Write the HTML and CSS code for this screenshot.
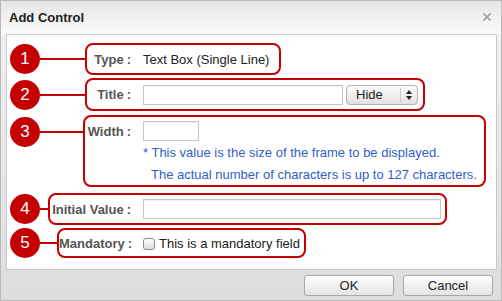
FILE: index.html
```html
<!DOCTYPE html>
<html lang="en">
<head>
    <meta charset="UTF-8">
    <title>Add Control</title>
    <link rel="stylesheet" href="styles.css">
</head>
<body>
    <div class="dialog">
        <div class="dialog-header">
            <h1>Add Control</h1>
            <svg class="close-icon" viewBox="0 0 10 10" width="10" height="10">
                <line x1="1.5" y1="1.5" x2="8.5" y2="8.5"></line>
                <line x1="8.5" y1="1.5" x2="1.5" y2="8.5"></line>
            </svg>
        </div>

        <div class="dialog-body">
            <!-- 1: type -->
            <div class="row row-type">
                <span class="badge">1</span>
                <span class="link"></span>
                <div class="frame">
                    <span class="label">Type<span class="colon">:</span></span>
                    <span class="value">Text Box (Single Line)</span>
                </div>
            </div>

            <!-- 2: title -->
            <div class="row row-title">
                <span class="badge">2</span>
                <span class="link"></span>
                <div class="frame">
                    <span class="label">Title<span class="colon">:</span></span>
                    <input type="text" class="text-input title-input">
                    <div class="select">
                        <span class="select-text">Hide</span>
                        <span class="select-arrows">
                            <svg viewBox="0 0 6 10" width="6" height="10">
                                <path d="M0 4 L3 0 L6 4 Z"></path>
                                <path d="M0 6 L3 10 L6 6 Z"></path>
                            </svg>
                        </span>
                    </div>
                </div>
            </div>

            <!-- 3: width -->
            <div class="row row-width">
                <span class="badge">3</span>
                <span class="link"></span>
                <div class="frame">
                    <div class="frame-line">
                        <span class="label">Width<span class="colon">:</span></span>
                        <input type="text" class="text-input width-input">
                    </div>
                    <div class="notes">
                        <p>* This value is the size of the frame to be displayed.</p>
                        <p class="indent">The actual number of characters is up to 127 characters.</p>
                    </div>
                </div>
            </div>

            <!-- 4: initial value -->
            <div class="row row-initial">
                <span class="badge">4</span>
                <span class="link"></span>
                <div class="frame">
                    <span class="label">Initial Value<span class="colon">:</span></span>
                    <input type="text" class="text-input initial-input">
                </div>
            </div>

            <!-- 5: mandatory -->
            <div class="row row-mandatory">
                <span class="badge">5</span>
                <span class="link"></span>
                <div class="frame">
                    <span class="label">Mandatory<span class="colon">:</span></span>
                    <label class="check">
                        <input type="checkbox">
                        <span>This is a mandatory field</span>
                    </label>
                </div>
            </div>
        </div>

        <div class="dialog-footer">
            <button class="btn">OK</button>
            <button class="btn">Cancel</button>
        </div>
    </div>
</body>
</html>
```

FILE: styles.css
```css
body {
    margin: 0;
    font-family: "Liberation Sans", Arial, sans-serif;
    font-size: 13px;
    color: #222;
    background-color: #fff;
}
.dialog {
    width: 502px;
    height: 301px;
    box-sizing: border-box;
    border: 1px solid #b9b9b9;
    display: flex;
    flex-direction: column;
    background: linear-gradient(#f3f3f3, #dddddd);
}
.dialog-header {
    height: 33px;
    padding: 0 9px 1px 8px;
    box-sizing: border-box;
    display: flex;
    align-items: center;
    justify-content: space-between;
    background: linear-gradient(#e6e6e6, #fbfbfb);
}
.dialog-header h1 {
    margin: 0;
    font-size: 13px;
    font-weight: bold;
    color: #222;
}
.close-icon line {
    stroke: #9a9a9a;
    stroke-width: 1.6;
}
.dialog-body {
    height: 236px;
    box-sizing: border-box;
    margin: 0 4px 0 5px;
    padding-top: 8px;
    border: 1px solid #c8c8c8;
    background-color: #fff;
}
.dialog-footer {
    flex: 1;
    display: flex;
    align-items: center;
    justify-content: flex-end;
    gap: 9px;
    padding-right: 8px;
}
.btn {
    width: 90px;
    height: 21px;
    padding: 0;
    font-family: inherit;
    font-size: 13px;
    color: #222;
    border: 1px solid #a8a8a8;
    border-radius: 3px;
    background: linear-gradient(#ffffff, #e4e4e4);
}

/* annotated rows */
.row {
    display: flex;
    align-items: center;
}
.badge {
    flex-shrink: 0;
    width: 30px;
    height: 30px;
    margin-left: 3px;
    border-radius: 50%;
    background-color: #c40000;
    color: #fff;
    font-size: 17px;
    line-height: 30px;
    text-align: center;
}
.link {
    flex-shrink: 0;
    height: 2px;
    background-color: #c40000;
}
.frame {
    display: flex;
    align-items: center;
    box-sizing: border-box;
    border: 2px solid #c40000;
    border-radius: 8px;
}
.label {
    flex-shrink: 0;
    margin-right: 12px;
    text-align: right;
    font-weight: bold;
    color: #555;
}
.colon {
    margin-left: 3px;
}
.value {
    color: #222;
}
.text-input {
    box-sizing: border-box;
    height: 20px;
    margin: 0;
    border: 1px solid #c6c6c6;
    box-shadow: inset 0 1px 1px #eee;
    background-color: #fff;
}

.row-type .link { width: 45px; }
.row-type .frame { height: 32px; padding-right: 10px; }
.row-type .label { width: 44px; }

.row-title { margin-top: 3px; }
.row-title .link { width: 45px; }
.row-title .frame { height: 33px; padding-right: 5px; }
.row-title .label { width: 44px; }
.title-input { width: 200px; }

.select {
    display: flex;
    align-items: center;
    box-sizing: border-box;
    width: 72px;
    height: 20px;
    margin-left: 3px;
    border: 1px solid #b3b3b3;
    border-radius: 4px;
    background: linear-gradient(#fdfdfd, #e1e1e1);
}
.select-text {
    flex: 1;
    padding-left: 9px;
}
.select-arrows {
    width: 16px;
    height: 14px;
    border-left: 1px solid #c9c9c9;
    display: flex;
    align-items: center;
    justify-content: center;
}
.select-arrows path {
    fill: #222;
}

.row-width {
    margin-top: 4px;
    align-items: flex-start;
}
.row-width .badge { margin-top: 2px; }
.row-width .link { width: 43px; margin-top: 16px; }
.row-width .frame {
    height: 72px;
    flex-direction: column;
    align-items: flex-start;
    padding: 4px 7px 0 0;
}
.row-width .label { width: 46px; }
.frame-line {
    display: flex;
    align-items: center;
}
.width-input { width: 56px; }
.notes {
    margin: 1px 0 0 58px;
    font-size: 13px;
    color: #3160c6;
}
.notes p {
    margin: 0;
    line-height: 22px;
}
.notes .indent {
    padding-left: 8px;
}

.row-initial { margin-top: 6px; }
.row-initial .link { width: 8px; }
.row-initial .frame { height: 32px; padding-right: 4px; }
.row-initial .label { width: 81px; }
.initial-input { width: 298px; }

.row-mandatory { margin-top: 3px; }
.row-mandatory .link { width: 17px; }
.row-mandatory .frame { height: 30px; padding-right: 4px; }
.row-mandatory .label { width: 72px; }
.check {
    display: flex;
    align-items: center;
}
.check input {
    appearance: none;
    width: 12px;
    height: 12px;
    margin: 1px 4px 0 0;
    border: 1px solid #8c8c8c;
    border-radius: 3px;
    background: linear-gradient(#ffffff, #dcdcdc);
}
```
